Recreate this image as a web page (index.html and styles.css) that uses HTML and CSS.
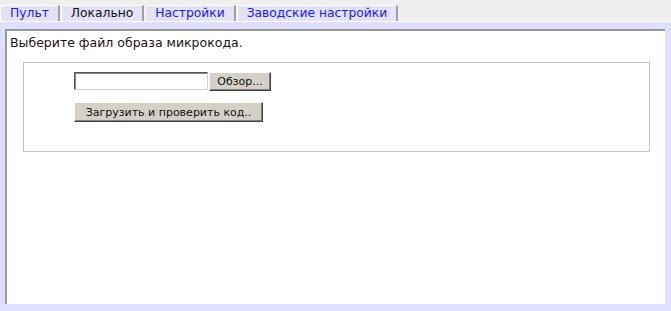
FILE: index.html
```html
<!DOCTYPE html>
<html lang="ru">
<head>
    <meta charset="UTF-8">
    <title>Локально</title>
    <link rel="stylesheet" href="styles.css">
</head>
<body>
    <div class="tabs">
        <a href="#" class="tab">Пульт</a>
        <a href="#" class="tab active">Локально</a>
        <a href="#" class="tab">Настройки</a>
        <a href="#" class="tab">Заводские настройки</a>
    </div>
    <div class="frame">
        <div class="panel">
            <p class="intro">Выберите файл образа микрокода.</p>
            <form class="upload-box">
                <div class="file-row">
                    <input type="text" class="file-input">
                    <button type="button" class="btn btn-browse">Обзор...</button>
                </div>
                <button type="button" class="btn btn-upload">Загрузить и проверить код..</button>
            </form>
        </div>
    </div>
</body>
</html>
```

FILE: styles.css
```css
* {
    margin: 0;
    padding: 0;
    box-sizing: border-box;
}
body {
    background: #eeeeee;
    font-family: "DejaVu Sans", Verdana, sans-serif;
    font-size: 12px;
    width: 671px;
    height: 311px;
    overflow: hidden;
}
.tabs {
    display: flex;
    padding-top: 5px;
    height: 22px;
    border-bottom: 1px solid #ffffff;
}
.tab {
    display: block;
    height: 16px;
    line-height: 15px;
    padding: 0 9px;
    margin-right: 1px;
    background: #e2e2f4;
    border-top: 1px solid #ffffff;
    border-left: 1px solid #ffffff;
    border-right: 2px solid #a0a0a0;
    color: #1a1aee;
    font-size: 12.3px;
    text-decoration: none;
}
.tab.active {
    color: #111111;
}
.frame {
    background: #dfdfff;
    height: 289px;
    padding: 7px 6px 7px 5px;
}
.panel {
    background: #ffffff;
    height: 275px;
    border-top: 2px solid #999999;
    border-left: 2px solid #999999;
    padding: 3px 15px 0 1px;
}
.intro {
    color: #221111;
    font-size: 12.5px;
    line-height: 18px;
    padding-left: 2px;
}
.upload-box {
    margin: 10px 0 0 15px;
    height: 90px;
    border: 1px solid #c4c4c4;
    padding: 9px 0 0 50px;
    display: flex;
    flex-direction: column;
    align-items: flex-start;
    gap: 11px;
}
.file-row {
    display: flex;
    gap: 1px;
}
.file-input {
    width: 134px;
    height: 18px;
    border: 1px solid;
    border-color: #555555 #d4d0c8 #d4d0c8 #555555;
    box-shadow: inset 1px 1px 0 #888888;
    background: #ffffff;
}
.btn {
    background: #d4d0c8;
    border: 1px solid;
    border-color: #ffffff #404040 #404040 #ffffff;
    box-shadow: inset -1px -1px 0 #808080;
    font-family: "DejaVu Sans", Verdana, sans-serif;
    font-size: 11px;
    color: #111111;
}
.btn-browse {
    width: 62px;
    height: 19px;
}
.btn-upload {
    width: 189px;
    height: 20px;
}
```
